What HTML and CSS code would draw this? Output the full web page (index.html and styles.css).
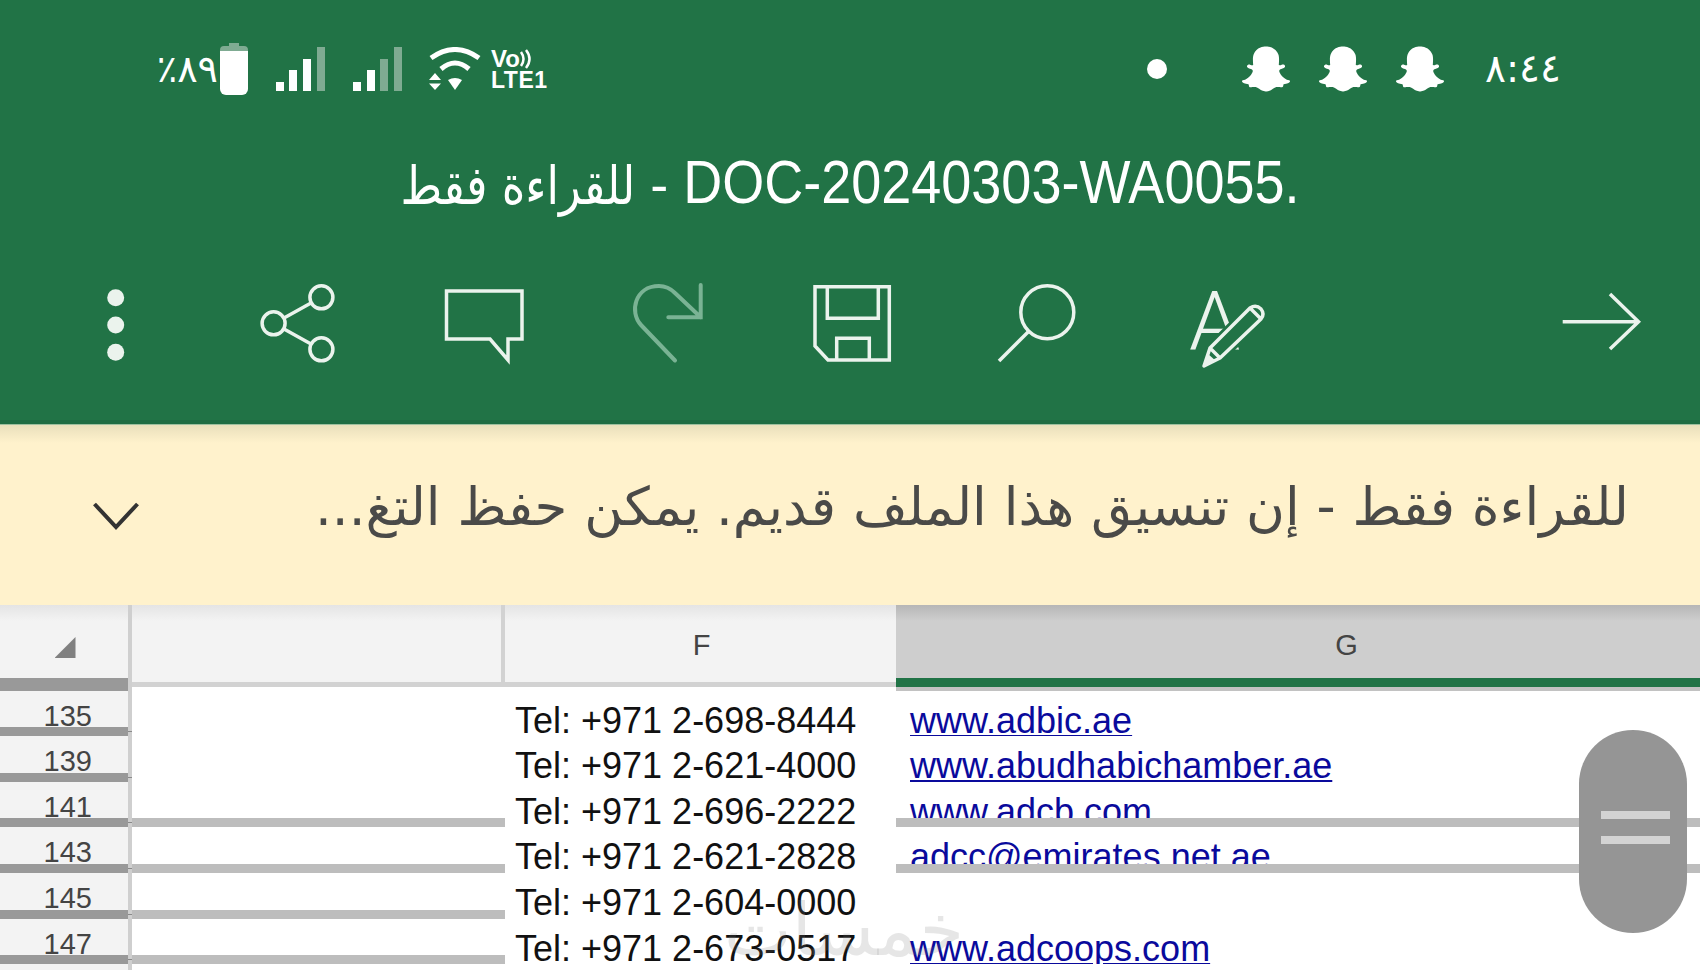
FILE: index.html
```html
<!DOCTYPE html>
<html lang="ar">
<head>
<meta charset="utf-8">
<title>DOC-20240303-WA0055</title>
<link rel="stylesheet" href="styles.css">
</head>
<body>
<div class="page">
  <header class="appbar">
    <div class="status">
      <div class="status-left">
        <span class="pct" dir="rtl">٨٩٪</span>
        <svg class="battery" viewBox="0 0 28 52"><path class="faded" d="M9 0h10v3h5a4 4 0 0 1 4 4v4H0V7a4 4 0 0 1 4-4h5z"/><path class="solid" d="M0 8h28v38a6 6 0 0 1-6 6H6a6 6 0 0 1-6-6z"/></svg>
        <svg class="signal" viewBox="0 0 49 44"><rect class="solid" x="0" y="35" width="8" height="9"/><rect class="solid" x="13" y="23" width="8" height="21"/><rect class="solid" x="27" y="12" width="8" height="32"/><rect class="faded" x="41" y="0" width="8" height="44"/></svg>
        <svg class="signal" viewBox="0 0 49 44"><rect class="solid" x="0" y="35" width="8" height="9"/><rect class="solid" x="14" y="23" width="8" height="21"/><rect class="faded" x="27" y="12" width="8" height="32"/><rect class="faded" x="41" y="0" width="8" height="44"/></svg>
        <svg class="wifi" viewBox="0 0 52 44"><path class="wave" d="M2 11 Q26 -6 50 11"/><path class="wave" d="M12 22 Q26 10 40 22"/><path class="solid" d="M19 33 Q26 29 33 33 L26 43z"/><path class="solid" d="M0 33h12L6 26zM0 36.500h12L6 43z"/></svg>
        <div class="volte">
          <div class="vo"><span>Vo</span><svg class="vo-waves" viewBox="0 0 12 20"><path d="M2 3q5 7 0 14M7 1q7 9 0 18"/></svg></div>
          <div class="lte">LTE1</div>
        </div>
      </div>
      <div class="status-right">
        <span class="dot"></span>
        <svg class="snap" viewBox="0 0 24 24"><path class="solid" d="M12.206.793c.99 0 4.347.276 5.93 3.821.529 1.193.403 3.219.299 4.847l-.003.06c-.012.18-.022.345-.03.51.075.045.203.09.401.09.3-.016.659-.12 1.033-.301.165-.088.344-.104.464-.104.182 0 .359.029.509.09.45.149.734.479.734.838.015.449-.39.839-1.213 1.168-.089.029-.209.075-.344.119-.45.135-1.139.36-1.333.81-.09.224-.061.524.12.868l.015.015c.06.136 1.526 3.475 4.791 4.014.255.044.435.27.42.509 0 .075-.015.149-.045.225-.24.569-1.273.988-3.146 1.271-.059.091-.12.375-.164.57-.029.179-.074.36-.134.553-.076.271-.27.405-.555.405h-.03c-.135 0-.313-.031-.538-.074-.36-.075-.765-.135-1.273-.135-.3 0-.599.015-.913.074-.6.104-1.123.464-1.723.884-.853.599-1.826 1.288-3.294 1.288-.06 0-.119-.015-.18-.015h-.149c-1.468 0-2.427-.675-3.279-1.288-.599-.42-1.107-.779-1.707-.884-.314-.045-.629-.074-.928-.074-.54 0-.958.089-1.272.149-.211.043-.391.074-.54.074-.374 0-.523-.224-.583-.42-.061-.192-.09-.389-.135-.567-.046-.181-.105-.494-.166-.57-1.918-.222-2.95-.642-3.189-1.226-.031-.063-.052-.15-.055-.225-.015-.243.165-.465.42-.509 3.264-.54 4.73-3.879 4.791-4.02l.016-.029c.18-.345.224-.645.119-.869-.195-.434-.884-.658-1.332-.809-.121-.029-.24-.074-.346-.119-1.107-.435-1.257-.93-1.197-1.273.09-.479.674-.793 1.168-.793.146 0 .27.029.383.074.42.194.789.3 1.104.3.234 0 .384-.06.465-.105l-.046-.569c-.098-1.626-.225-3.651.307-4.837C7.392 1.077 10.739.807 11.727.807l.419-.015h.06z"/></svg>
        <svg class="snap" viewBox="0 0 24 24"><path class="solid" d="M12.206.793c.99 0 4.347.276 5.93 3.821.529 1.193.403 3.219.299 4.847l-.003.06c-.012.18-.022.345-.03.51.075.045.203.09.401.09.3-.016.659-.12 1.033-.301.165-.088.344-.104.464-.104.182 0 .359.029.509.09.45.149.734.479.734.838.015.449-.39.839-1.213 1.168-.089.029-.209.075-.344.119-.45.135-1.139.36-1.333.81-.09.224-.061.524.12.868l.015.015c.06.136 1.526 3.475 4.791 4.014.255.044.435.27.42.509 0 .075-.015.149-.045.225-.24.569-1.273.988-3.146 1.271-.059.091-.12.375-.164.57-.029.179-.074.36-.134.553-.076.271-.27.405-.555.405h-.03c-.135 0-.313-.031-.538-.074-.36-.075-.765-.135-1.273-.135-.3 0-.599.015-.913.074-.6.104-1.123.464-1.723.884-.853.599-1.826 1.288-3.294 1.288-.06 0-.119-.015-.18-.015h-.149c-1.468 0-2.427-.675-3.279-1.288-.599-.42-1.107-.779-1.707-.884-.314-.045-.629-.074-.928-.074-.54 0-.958.089-1.272.149-.211.043-.391.074-.54.074-.374 0-.523-.224-.583-.42-.061-.192-.09-.389-.135-.567-.046-.181-.105-.494-.166-.57-1.918-.222-2.95-.642-3.189-1.226-.031-.063-.052-.15-.055-.225-.015-.243.165-.465.42-.509 3.264-.54 4.73-3.879 4.791-4.02l.016-.029c.18-.345.224-.645.119-.869-.195-.434-.884-.658-1.332-.809-.121-.029-.24-.074-.346-.119-1.107-.435-1.257-.93-1.197-1.273.09-.479.674-.793 1.168-.793.146 0 .27.029.383.074.42.194.789.3 1.104.3.234 0 .384-.06.465-.105l-.046-.569c-.098-1.626-.225-3.651.307-4.837C7.392 1.077 10.739.807 11.727.807l.419-.015h.06z"/></svg>
        <svg class="snap" viewBox="0 0 24 24"><path class="solid" d="M12.206.793c.99 0 4.347.276 5.93 3.821.529 1.193.403 3.219.299 4.847l-.003.06c-.012.18-.022.345-.03.51.075.045.203.09.401.09.3-.016.659-.12 1.033-.301.165-.088.344-.104.464-.104.182 0 .359.029.509.09.45.149.734.479.734.838.015.449-.39.839-1.213 1.168-.089.029-.209.075-.344.119-.45.135-1.139.36-1.333.81-.09.224-.061.524.12.868l.015.015c.06.136 1.526 3.475 4.791 4.014.255.044.435.27.42.509 0 .075-.015.149-.045.225-.24.569-1.273.988-3.146 1.271-.059.091-.12.375-.164.57-.029.179-.074.36-.134.553-.076.271-.27.405-.555.405h-.03c-.135 0-.313-.031-.538-.074-.36-.075-.765-.135-1.273-.135-.3 0-.599.015-.913.074-.6.104-1.123.464-1.723.884-.853.599-1.826 1.288-3.294 1.288-.06 0-.119-.015-.18-.015h-.149c-1.468 0-2.427-.675-3.279-1.288-.599-.42-1.107-.779-1.707-.884-.314-.045-.629-.074-.928-.074-.54 0-.958.089-1.272.149-.211.043-.391.074-.54.074-.374 0-.523-.224-.583-.42-.061-.192-.09-.389-.135-.567-.046-.181-.105-.494-.166-.57-1.918-.222-2.95-.642-3.189-1.226-.031-.063-.052-.15-.055-.225-.015-.243.165-.465.42-.509 3.264-.54 4.73-3.879 4.791-4.02l.016-.029c.18-.345.224-.645.119-.869-.195-.434-.884-.658-1.332-.809-.121-.029-.24-.074-.346-.119-1.107-.435-1.257-.93-1.197-1.273.09-.479.674-.793 1.168-.793.146 0 .27.029.383.074.42.194.789.3 1.104.3.234 0 .384-.06.465-.105l-.046-.569c-.098-1.626-.225-3.651.307-4.837C7.392 1.077 10.739.807 11.727.807l.419-.015h.06z"/></svg>
        <span class="time">٨:٤٤</span>
      </div>
    </div>
    <div class="title"><span class="title-ar">للقراءة فقط</span> - <span class="title-doc">DOC-20240303-WA0055.</span></div>
    <div class="toolbar">
      <svg class="tool" viewBox="0 0 120 100"><circle class="fill-icon" cx="59.700" cy="27.700" r="8.500"/><circle class="fill-icon" cx="59.700" cy="55" r="8.500"/><circle class="fill-icon" cx="59.700" cy="82.300" r="8.500"/></svg>
      <svg class="tool" viewBox="0 0 120 100"><g class="line"><circle cx="80.400" cy="27.300" r="11.500"/><circle cx="32.600" cy="53.300" r="11.500"/><circle cx="80.400" cy="79.300" r="11.500"/><path d="M43 48 70 33M43 59 70 74"/></g></svg>
      <svg class="tool" viewBox="0 0 120 100"><path class="line" d="M20.500 21H96V69H82V90L64 69H20.500Z"/></svg>
      <svg class="tool" viewBox="0 0 120 100"><path class="line line-off" d="M64 90.500 30 55C18 42 24 16 48 16 56 16 60 19 64 23L89.700 47.300M89.700 15V47.300H57.300"/></svg>
      <svg class="tool" viewBox="0 0 120 100"><path class="line" d="M19 16.700H93.300V90H32L19 76ZM31.300 16.700V48.300H82.300V16.700M40.700 90V68.300H73.300V90"/></svg>
      <svg class="tool" viewBox="0 0 120 100"><g class="line"><circle cx="66.300" cy="42.300" r="26.500"/><path d="M47.300 61.700 18 91"/></g></svg>
      <svg class="tool" viewBox="0 0 120 100">
        <text class="tool-letter" x="23" y="79">A</text>
        <path class="pencil-gap" d="M38 96 44 78 84 38Q90 34 95 39 99 44 95 49L54 88Z"/>
        <path class="line pencil" d="M38 96 44 78 84 38Q90 34 95 39 99 44 95 49L54 88ZM84 38 95 49M44 78 54 88"/>
        <path class="fill-icon" d="M38 96 42 84 50 91Z"/>
      </svg>
      <svg class="tool tool-end" viewBox="0 0 120 100"><path class="line" d="M22.700 51.700H98M70 24 98.500 51.700 70 79"/></svg>
    </div>
  </header>

  <section class="banner">
    <svg class="chevron" viewBox="0 0 46 28"><path d="M1.500 2 23 25 44.500 2"/></svg>
    <div class="banner-text" dir="rtl">للقراءة فقط - إن تنسيق هذا الملف قديم. يمكن حفظ التغ...</div>
  </section>

  <main class="sheet">
    <div class="row row-head">
      <div class="corner"><span class="corner-mark"></span></div>
      <div class="sep"></div>
      <div class="col col-e"></div>
      <div class="col col-f">F</div>
      <div class="col col-g">G</div>
    </div>
    <div class="row">
      <div class="num">135</div><div class="sep"></div><div class="cell"></div>
      <div class="cell tel">Tel: +971 2-698-8444</div>
      <div class="cell web"><a href="#">www.adbic.ae</a></div>
    </div>
    <div class="row">
      <div class="num">139</div><div class="sep"></div><div class="cell"></div>
      <div class="cell tel">Tel: +971 2-621-4000</div>
      <div class="cell web"><a href="#">www.abudhabichamber.ae</a></div>
    </div>
    <div class="row">
      <div class="num">141</div><div class="sep"></div><div class="cell band"></div>
      <div class="cell tel">Tel: +971 2-696-2222</div>
      <div class="cell web band"><a href="#">www.adcb.com</a></div>
    </div>
    <div class="row">
      <div class="num">143</div><div class="sep"></div><div class="cell band"></div>
      <div class="cell tel">Tel: +971 2-621-2828</div>
      <div class="cell web band"><a href="#">adcc@emirates.net.ae</a></div>
    </div>
    <div class="row">
      <div class="num">145</div><div class="sep"></div><div class="cell band"></div>
      <div class="cell tel">Tel: +971 2-604-0000</div>
      <div class="cell web"></div>
    </div>
    <div class="row">
      <div class="num">147</div><div class="sep"></div><div class="cell band"></div>
      <div class="cell tel">Tel: +971 2-673-0517</div>
      <div class="cell web"><a href="#">www.adcoops.com</a></div>
    </div>
    <div class="row">
      <div class="num"></div><div class="sep"></div><div class="cell"></div><div class="cell"></div><div class="cell"></div>
    </div>
    <div class="thumb"><span class="thumb-bar"></span><span class="thumb-bar"></span></div>
    <div class="watermark">خمسات</div>
  </main>
</div>
</body>
</html>
```

FILE: styles.css
```css
* { box-sizing: border-box; }
html, body { margin: 0; padding: 0; background: #fff; }
.page {
  width: 1700px;
  height: 970px;
  overflow: hidden;
  font-family: "Liberation Sans", "DejaVu Sans", sans-serif;
}

/* App bar */
.appbar {
  height: 425px;
  background: #217346;
  color: #fff;
  display: flex;
  flex-direction: column;
  border-bottom: 1px solid #9dbf9f;
  box-shadow: inset 0 -4px 0 #1f6c43;
}
.solid { fill: #fff; }
.faded { fill: #7fab92; }

.status {
  height: 138px;
  flex: none;
  display: flex;
  align-items: center;
  justify-content: space-between;
  padding: 0 141px 0 157px;
}
.status-left, .status-right { display: flex; align-items: center; }
.pct {
  width: 61px;
  margin-right: 2px;
  font-family: "DejaVu Sans", sans-serif;
  font-size: 38px;
  line-height: 40px;
  white-space: nowrap;
  text-align: center;
}
.battery { width: 28px; height: 52px; margin-right: 28px; }
.signal { width: 49px; height: 44px; margin-right: 28px; }
.signal + .wifi { margin-left: -1px; }
.wifi { width: 52px; height: 44px; margin-right: 10px; }
.wave { fill: none; stroke: #fff; stroke-width: 5; }
.volte { width: 56px; font-weight: 700; line-height: 20px; }
.vo { display: flex; align-items: center; font-size: 24px; height: 22px; }
.vo-waves { width: 12px; height: 20px; margin-left: -1px; }
.vo-waves path { fill: none; stroke: #fff; stroke-width: 2.500; }
.lte { font-size: 23px; height: 20px; letter-spacing: 0.500px; }

.dot {
  width: 20px;
  height: 20px;
  border-radius: 50%;
  background: #fff;
  margin-right: 75px;
}
.snap { width: 48px; height: 48px; margin-right: 29px; }
.snap + .time { margin-left: 12px; }
.time {
  width: 74px;
  font-family: "DejaVu Sans", sans-serif;
  font-size: 39px;
  line-height: 40px;
  white-space: nowrap;
  text-align: center;
}

.title {
  height: 132px;
  flex: none;
  padding-top: 14px;
  text-align: center;
  font-size: 54px;
  line-height: 64px;
  white-space: nowrap;
  font-family: "Liberation Sans", "DejaVu Sans", sans-serif;
}
.title-ar {
  display: inline-block;
  font-family: "DejaVu Sans", sans-serif;
  font-size: 45px;
  transform: scaleY(1.180);
  transform-origin: 50% 68%;
}
.title-doc {
  display: inline-block;
  transform: scaleY(1.120);
  transform-origin: 50% 80%;
}

.toolbar {
  height: 100px;
  flex: none;
  display: flex;
  gap: 65px;
  padding: 0 40px 0 56px;
}
.tool { width: 120px; height: 100px; flex: none; }
.tool-end { margin-left: auto; }
.line {
  fill: none;
  stroke: #ebf3ed;
  stroke-width: 3.500;
}
.line-off { stroke: #7ab394; stroke-width: 4; stroke-linecap: round; }
.fill-icon { fill: #ebf3ed; }
.tool-letter {
  font-family: Roboto, "Liberation Sans", sans-serif;
  font-weight: 300;
  font-size: 82px;
  fill: #ebf3ed;
}
.pencil-gap { fill: #217346; stroke: #217346; stroke-width: 9; }
.pencil { stroke-linejoin: round; }

/* Read-only banner */
.banner {
  height: 180px;
  background: linear-gradient(#e9dfbc 0, #fff2cc 18px);
  display: flex;
  align-items: center;
  justify-content: space-between;
  padding: 0 71px 0 93px;
  color: #4a4a48;
}
.chevron { width: 46px; height: 28px; margin-top: 1px; }
.chevron path { fill: none; stroke: #333; stroke-width: 4; }
.banner-text {
  font-family: "DejaVu Sans", sans-serif;
  font-size: 53px;
  line-height: 60px;
  white-space: nowrap;
  margin-top: -17px;
}

/* Sheet */
.sheet { position: relative; height: 365px; background: #fff; overflow: hidden; }
.row {
  display: grid;
  grid-template-columns: 127.500px 4.500px 373px 391px 804px;
  height: 45.600px;
}
.row-head { height: 85.700px; }
.sep {
  background: linear-gradient(#cfcfcf calc(100% - 5px), #8a8a8a calc(100% - 5px), #8a8a8a calc(100% - 4px), #cfcfcf calc(100% - 4px));
}
.row-head .sep { background: #cfcfcf; }

.corner {
  background: linear-gradient(#e4e4e4, #f3f3f3 16px);
  border-bottom: 13.700px solid #999;
  padding: 32px 0 0 54.500px;
}
.corner-mark {
  display: block;
  width: 21px;
  height: 21px;
  background: #808080;
  clip-path: polygon(100% 0, 100% 100%, 0 100%);
}
.col {
  background: linear-gradient(#e4e4e4, #f3f3f3 16px);
  font-size: 29px;
  line-height: 34px;
  color: #444;
  text-align: center;
  padding-top: 23px;
}
.col-e, .col-f {
  margin-bottom: 4px;
  border-bottom: 5px solid #d2d2d2;
}
.col-f { padding-left: 2px; }
.col-e { border-right: 4px solid #d2d2d2; }
.col-g {
  background: linear-gradient(#b6b6b6, #cecece 16px);
  margin-bottom: 4px;
  border-bottom: 9.700px solid #217346;
  box-shadow: 0 4px 0 #c2c2c2;
  padding-left: 97px;
}

.num {
  background: #f3f3f3;
  border-bottom: 9.300px solid #999;
  font-size: 29px;
  line-height: 28px;
  color: #444;
  padding: 11px 0 0 43.500px;
  overflow: hidden;
}
.cell { overflow: hidden; white-space: nowrap; font-size: 36px; line-height: 45.600px; padding-top: 7px; }
.band { border-bottom: 9.300px solid #bdbdbd; }
.tel { color: #111; padding-left: 10px; }
.web { padding-left: 14px; }
.web a { color: #0a0a9c; }

.thumb {
  position: absolute;
  left: 1579px;
  top: 124.500px;
  width: 108px;
  height: 203px;
  border-radius: 54px;
  background: #959595;
  display: flex;
  flex-direction: column;
  align-items: center;
  gap: 17px;
  padding: 81px 0 0 5px;
}
.thumb-bar { width: 69px; height: 8px; background: #d3d3d3; }

.watermark {
  position: absolute;
  left: 724px;
  top: 285px;
  width: 221px;
  text-align: center;
  font-family: "DejaVu Sans", sans-serif;
  font-size: 72px;
  line-height: 80px;
  color: rgba(120, 120, 120, 0.190);
  white-space: nowrap;
}
```
